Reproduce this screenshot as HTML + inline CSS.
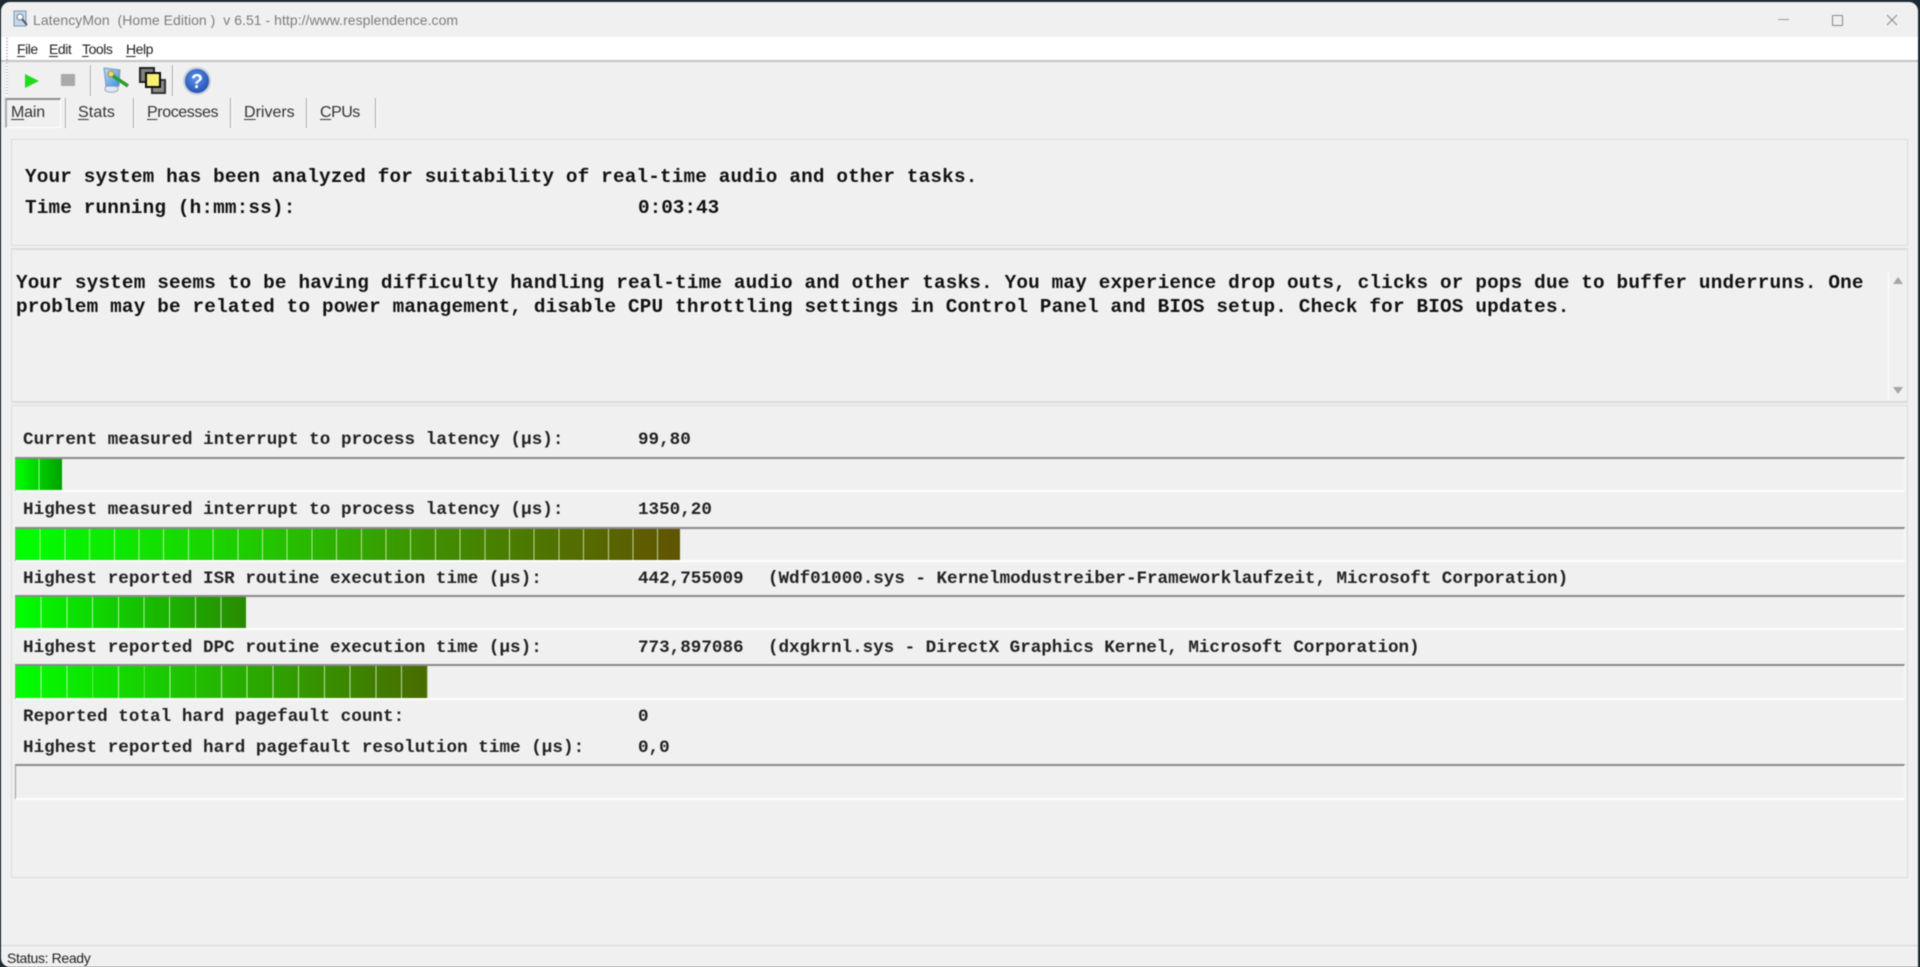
<!DOCTYPE html>
<html><head><meta charset="utf-8"><title>LatencyMon</title>
<style>
html,body{margin:0;padding:0;background:#1c2a33;width:1920px;height:967px;overflow:hidden}
#w{position:absolute;left:1px;top:2px;width:1917px;height:965px;background:#f0f0f0;border-radius:9px 9px 0 9px;overflow:hidden;filter:blur(.45px)}
.a{position:absolute}
.t{position:absolute;white-space:pre;font-family:"Liberation Sans",sans-serif}
.m{position:absolute;white-space:pre;font-family:"Liberation Mono",monospace;font-weight:bold;color:#111}
.h{font-size:19.33px;line-height:24px;height:24px}
.r{font-size:17.6px;line-height:22px;height:22px;color:#222}
.bar{position:absolute;left:14px;width:1890px;background:#f0f0f0;border-top:2px solid #8a8a8a;border-left:1px solid #9a9a9a;border-bottom:2px solid #fff;border-right:1px solid #fafafa;box-sizing:border-box}
.fill{position:absolute;left:0;top:0;bottom:0}
.sep{position:absolute;left:0;top:0;bottom:0;right:0}
.tab{font-size:16px;line-height:20px;color:#333;top:101px;letter-spacing:-.2px}
.menu{font-size:14px;line-height:18px;color:#222;top:38px;letter-spacing:-.45px}
.vs{position:absolute;width:1px;background:#a8a8a8;border-right:1px solid #fff}
u{text-decoration-thickness:1px;text-underline-offset:2px}
</style></head><body>
<div id="w">
<!-- title bar -->
<svg class="a" style="left:11px;top:7px" width="18" height="20" viewBox="0 0 18 20"><rect x="2" y="2" width="12" height="15" fill="#c4d8ea" stroke="#7e97ae"/><circle cx="8" cy="8" r="3" fill="#fff" stroke="#6a7c8c"/><path d="M10 10l5 6" stroke="#556" stroke-width="2"/></svg>
<div class="t" style="left:32px;top:10px;font-size:14px;line-height:17px;color:#7c7c7c;letter-spacing:.04px">LatencyMon  (Home Edition )  v 6.51 - http://www.resplendence.com</div>
<div class="a" style="left:1777px;top:17px;width:11px;height:1px;background:#999"></div>
<div class="a" style="left:1831px;top:13px;width:9px;height:9px;border:1px solid #888;border-radius:1px"></div>
<svg class="a" style="left:1885px;top:12px" width="12" height="12"><path d="M1 1l10 10M11 1L1 11" stroke="#888" stroke-width="1" fill="none"/></svg>
<!-- menu -->
<div class="a" style="left:0;top:35px;width:1917px;height:23px;background:#fff"></div>
<div class="a" style="left:0;top:58px;width:1917px;height:2px;background:#c4c4c4"></div>
<div class="a" style="left:5px;top:36px;width:2px;height:22px;background:repeating-linear-gradient(#aaa 0 1px,#fff 1px 3px)"></div>
<div class="t menu" style="left:16px"><u>F</u>ile</div>
<div class="t menu" style="left:48px"><u>E</u>dit</div>
<div class="t menu" style="left:81px"><u>T</u>ools</div>
<div class="t menu" style="left:125px"><u>H</u>elp</div>
<!-- toolbar -->
<div class="a" style="left:5px;top:61px;width:2px;height:33px;background:repeating-linear-gradient(#bbb 0 1px,#fff 1px 3px)"></div>
<svg class="a" style="left:23px;top:71px" width="16" height="16"><path d="M1 1L15 8L1 15Z" fill="#1fdc1f"/></svg>
<div class="a" style="left:60px;top:72px;width:14px;height:12px;background:#a9a9a9"></div>
<div class="vs" style="left:89px;top:63px;height:31px"></div>
<svg class="a" style="left:99px;top:63px" width="30" height="30" viewBox="0 0 30 30"><defs><linearGradient id="sc" x1="0" y1="0" x2="1" y2="1"><stop offset="0" stop-color="#bcdcf6"/><stop offset="1" stop-color="#3a8fe0"/></linearGradient></defs><path d="M5 23c0-3 12-3 13 0v2c-2 3-11 3-13 0z" fill="#e0e6f2" stroke="#9aa6bc"/><path d="M4 3L20 5L19 21L6 21Z" fill="url(#sc)" stroke="#7f96b4"/><circle cx="11" cy="9" r="3" fill="#f0d868" stroke="#9a8f60"/><path d="M13 11L28 21" stroke="#2f9c2f" stroke-width="3.5"/></svg>
<svg class="a" style="left:138px;top:65px" width="28" height="27" viewBox="0 0 28 27"><rect x="1" y="1" width="14" height="14" fill="#808080" stroke="#222" stroke-width="2"/><rect x="13" y="13" width="13" height="13" fill="#8a8a8a" stroke="#333" stroke-width="2"/><rect x="7" y="6" width="14" height="14" fill="#f7ee72" stroke="#0a0a0a" stroke-width="2"/></svg>
<div class="vs" style="left:171px;top:63px;height:31px"></div>
<svg class="a" style="left:181px;top:64px" width="30" height="30" viewBox="0 0 30 30"><defs><radialGradient id="hb" cx=".45" cy=".4" r=".65"><stop offset="0" stop-color="#5f96ea"/><stop offset="1" stop-color="#1c46ad"/></radialGradient></defs><circle cx="15" cy="15" r="13" fill="url(#hb)" stroke="#c6cdd8" stroke-width="2"/><text x="15" y="22" text-anchor="middle" font-family="Liberation Sans,sans-serif" font-weight="bold" font-size="20" fill="#fff">?</text></svg>
<!-- tabs -->
<div class="a" style="left:4px;top:96px;width:53px;height:27px;border-top:2px solid #8e8e8e;border-left:2px solid #aaa;border-right:1px solid #fff;border-bottom:1px solid #fff"></div>
<div class="t tab" style="left:10px"><u>M</u>ain</div>
<div class="vs" style="left:64px;top:96px;height:30px"></div>
<div class="t tab" style="left:77px;letter-spacing:.1px"><u>S</u>tats</div>
<div class="vs" style="left:132px;top:96px;height:30px"></div>
<div class="t tab" style="left:146px;letter-spacing:-.4px"><u>P</u>rocesses</div>
<div class="vs" style="left:229px;top:96px;height:30px"></div>
<div class="t tab" style="left:243px;letter-spacing:0"><u>D</u>rivers</div>
<div class="vs" style="left:305px;top:96px;height:30px"></div>
<div class="t tab" style="left:319px;letter-spacing:-.5px"><u>C</u>PUs</div>
<div class="vs" style="left:374px;top:96px;height:30px"></div>
<!-- panels -->
<div class="a" style="left:10px;top:137px;width:1897px;height:107px;border:1px solid #dcdcdc;box-sizing:border-box"></div>
<div class="a" style="left:10px;top:246px;width:1897px;height:155px;border:1px solid #dcdcdc;border-width:2px 1px;box-sizing:border-box"></div>
<div class="a" style="left:10px;top:403px;width:1897px;height:473px;border:1px solid #dcdcdc;box-sizing:border-box"></div>
<div class="m h" style="left:24px;top:163px;letter-spacing:.16px">Your system has been analyzed for suitability of real-time audio and other tasks.</div>
<div class="m h" style="left:24px;top:193.5px;letter-spacing:.16px">Time running (h:mm:ss):</div>
<div class="m h" style="left:637px;top:193.5px">0:03:43</div>
<div class="m h" style="left:15px;top:268.5px;letter-spacing:.17px">Your system seems to be having difficulty handling real-time audio and other tasks. You may experience drop outs, clicks or pops due to buffer underruns. One</div>
<div class="m h" style="left:15px;top:292.5px;letter-spacing:.17px">problem may be related to power management, disable CPU throttling settings in Control Panel and BIOS setup. Check for BIOS updates.</div>
<div class="a" style="left:1887px;top:270px;width:1px;height:128px;background:#fff"></div>
<svg class="a" style="left:1891px;top:274px" width="12" height="10"><path d="M6 1L11 8H1Z" fill="#a6a6a6"/></svg>
<svg class="a" style="left:1891px;top:384px" width="12" height="10"><path d="M1 1H11L6 8Z" fill="#a6a6a6"/></svg>
<!-- rows -->
<div class="m r" style="left:22px;top:426.5px;letter-spacing:.04px">Current measured interrupt to process latency (µs):</div>
<div class="m r" style="left:637px;top:426.5px">99,80</div>
<div class="bar" style="top:455px;height:35px"><div class="fill" style="width:46px;background:linear-gradient(90deg,#00ff00,#00a000)"></div><div class="sep" style="width:46px;background:repeating-linear-gradient(90deg,transparent 0 22.6px,rgba(230,255,230,.75) 22.6px 23.6px)"></div></div>
<div class="m r" style="left:22px;top:496.5px;letter-spacing:.04px">Highest measured interrupt to process latency (µs):</div>
<div class="m r" style="left:637px;top:496.5px">1350,20</div>
<div class="bar" style="top:525px;height:35px"><div class="fill" style="width:664px;background:linear-gradient(90deg,#00ff00,#1fcc00 35%,#3f9000 62%,#625400)"></div><div class="sep" style="width:664px;background:repeating-linear-gradient(90deg,transparent 0 23.7px,rgba(230,255,210,.7) 23.7px 24.7px)"></div></div>
<div class="m r" style="left:22px;top:565.5px;letter-spacing:.03px">Highest reported ISR routine execution time (µs):</div>
<div class="m r" style="left:637px;top:565.5px">442,755009</div>
<div class="m r" style="left:767px;top:565.5px;letter-spacing:-.03px">(Wdf01000.sys - Kernelmodustreiber-Frameworklaufzeit, Microsoft Corporation)</div>
<div class="bar" style="top:593px;height:35px"><div class="fill" style="width:230px;background:linear-gradient(90deg,#00ff00,#2a8a00)"></div><div class="sep" style="width:230px;background:repeating-linear-gradient(90deg,transparent 0 24.7px,rgba(230,255,220,.75) 24.7px 25.7px)"></div></div>
<div class="m r" style="left:22px;top:634.5px;letter-spacing:.03px">Highest reported DPC routine execution time (µs):</div>
<div class="m r" style="left:637px;top:634.5px">773,897086</div>
<div class="m r" style="left:767px;top:634.5px;letter-spacing:-.05px">(dxgkrnl.sys - DirectX Graphics Kernel, Microsoft Corporation)</div>
<div class="bar" style="top:662px;height:36px"><div class="fill" style="width:412px;background:linear-gradient(90deg,#00ff00,#4a6a00)"></div><div class="sep" style="width:412px;background:repeating-linear-gradient(90deg,transparent 0 24.75px,rgba(230,255,220,.75) 24.75px 25.75px)"></div></div>
<div class="m r" style="left:22px;top:703.5px;letter-spacing:.03px">Reported total hard pagefault count:</div>
<div class="m r" style="left:637px;top:703.5px">0</div>
<div class="m r" style="left:22px;top:734.5px;letter-spacing:.03px">Highest reported hard pagefault resolution time (µs):</div>
<div class="m r" style="left:637px;top:734.5px">0,0</div>
<div class="bar" style="top:762px;height:36px"></div>
<!-- status -->
<div class="a" style="left:0;top:943px;width:1917px;height:1px;background:#d6d6d6"></div>
<div class="t" style="left:6px;top:948px;font-size:14px;line-height:17px;color:#222;letter-spacing:-.35px">Status: Ready</div>
</div>
</body></html>
